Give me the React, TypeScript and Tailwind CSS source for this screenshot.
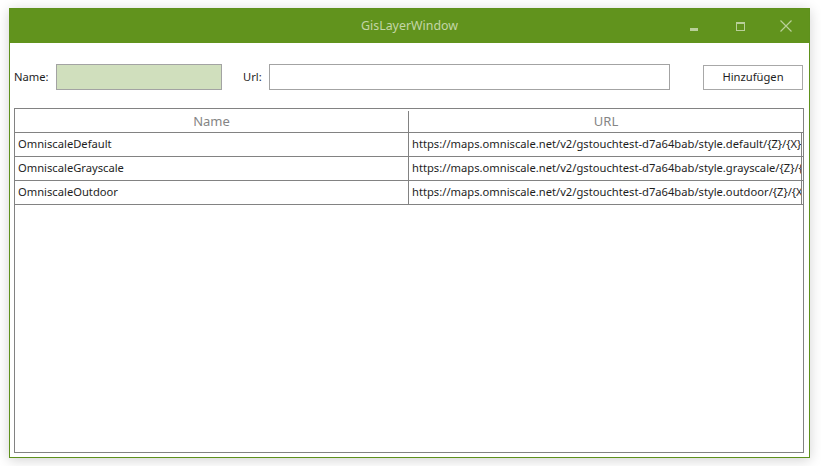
import React from 'react';

const rows = [
  { name: 'OmniscaleDefault', url: 'https://maps.omniscale.net/v2/gstouchtest-d7a64bab/style.default/{Z}/{X}/{Y}.png' },
  { name: 'OmniscaleGrayscale', url: 'https://maps.omniscale.net/v2/gstouchtest-d7a64bab/style.grayscale/{Z}/{X}/{Y}.png' },
  { name: 'OmniscaleOutdoor', url: 'https://maps.omniscale.net/v2/gstouchtest-d7a64bab/style.outdoor/{Z}/{X}/{Y}.png' },
];

export default function App() {
  return (
    <div className="w-[821px] h-[466px] bg-white pt-[8px] pl-[9px] overflow-hidden" style={{ fontFamily: '"Segoe UI", "Noto Sans", sans-serif' }}>
      <div className="w-[801px] h-[450px] border border-[#5e911c] bg-white flex flex-col shadow-[0_2px_12px_rgba(0,0,0,0.18)]">
        {/* Title bar */}
        <div className="h-[34px] bg-[#61931d] flex items-center relative shrink-0">
          <div className="flex-1 text-center text-[12.4px] text-[#c3d6a6]">GisLayerWindow</div>
          <div className="absolute right-0 top-0 h-full flex items-center">
            <div className="w-[46px] flex justify-center">
              <div className="w-[8px] h-[3px] bg-[#b9cf99] mt-[6px]" />
            </div>
            <div className="w-[46px] flex justify-center">
              <div className="w-[9px] h-[9px] border border-[#b9cf99] border-t-[2px]" />
            </div>
            <div className="w-[46px] flex justify-center">
              <svg width="12" height="12" viewBox="0 0 12 12">
                <path d="M0.5 0.5 L11.5 11.5 M11.5 0.5 L0.5 11.5" stroke="#b9cf99" strokeWidth="1.2" />
              </svg>
            </div>
          </div>
        </div>

        {/* Content */}
        <div className="flex-1 flex flex-col pl-[4px] pr-[5px] pt-[21px] pb-[4px] text-[11.2px] text-[#1e1e1e]">
          <div className="flex items-center h-[26px]">
            <span className="w-[42px]">Name:</span>
            <div className="w-[166px] h-[26px] bg-[#d0dfbd] border border-[#a3a3a3]" />
            <span className="ml-[21px] w-[26px]">Url:</span>
            <div className="w-[401px] h-[26px] border border-[#a3a3a3] bg-white" />
            <div className="ml-[33px] w-[100px] h-[25px] border border-[#a8a8a8] bg-white flex items-center justify-center mt-[1px]">
              Hinzufügen
            </div>
          </div>

          <div className="mt-[18px] flex-1 border border-[#828282] overflow-hidden">
            <div className="flex h-[24px] border-b border-[#828282] text-[#858585] text-[13px] pt-[2px]">
              <div className="w-[394px] border-r border-[#828282] flex items-center justify-center">Name</div>
              <div className="flex-1 flex items-center justify-center">URL</div>
            </div>
            {rows.map((r) => (
              <div key={r.name} className="flex h-[24px] border-b border-[#828282]">
                <div className="w-[394px] shrink-0 border-r border-[#828282] flex items-center pl-[3px]">{r.name}</div>
                <div className="w-[393px] shrink-0 border-r border-[#828282] flex items-center pl-[3px] whitespace-nowrap overflow-hidden">
                  {r.url}
                </div>
              </div>
            ))}
          </div>
        </div>
      </div>
    </div>
  );
}
